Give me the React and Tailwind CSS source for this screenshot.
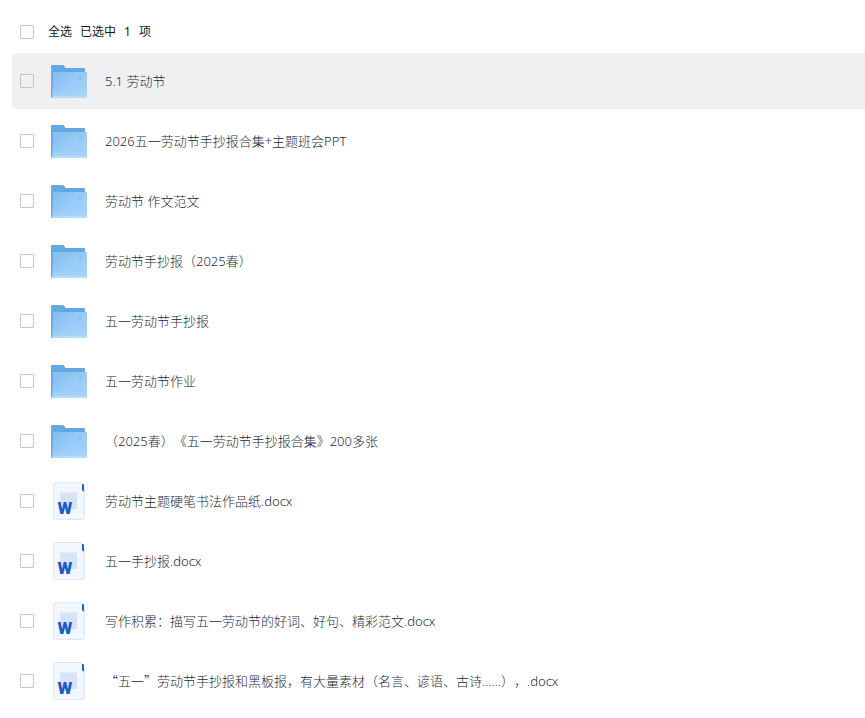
import React, { useState } from 'react'

const files = [
  { id: 1, type: 'folder', name: '5.1 劳动节' },
  { id: 2, type: 'folder', name: '2026五一劳动节手抄报合集+主题班会PPT' },
  { id: 3, type: 'folder', name: '劳动节 作文范文' },
  { id: 4, type: 'folder', name: '劳动节手抄报（2025春）' },
  { id: 5, type: 'folder', name: '五一劳动节手抄报' },
  { id: 6, type: 'folder', name: '五一劳动节作业' },
  { id: 7, type: 'folder', name: '（2025春）《五一劳动节手抄报合集》200多张' },
  { id: 8, type: 'doc', name: '劳动节主题硬笔书法作品纸.docx' },
  { id: 9, type: 'doc', name: '五一手抄报.docx' },
  { id: 10, type: 'doc', name: '写作积累：描写五一劳动节的好词、好句、精彩范文.docx' },
  {
    id: 11,
    type: 'doc',
    // curly quotes are full width only in the CJK font
    name: (
      <>
        <span className="font-['Noto_Sans_CJK_SC',sans-serif]">“五一”</span>
        劳动节手抄报和黑板报，有大量素材（名言、谚语、古诗……），.docx
      </>
    ),
  },
]

const FolderIcon = () => (
  <svg viewBox="0 0 36 34" className="w-9 h-[34px]" aria-hidden="true">
    <defs>
      <linearGradient id="folderFront" x1="0" y1="0" x2="1" y2="1">
        <stop offset="0" stopColor="#80bdec" />
        <stop offset="0.5" stopColor="#98cbf6" />
        <stop offset="1" stopColor="#a8d4f9" />
      </linearGradient>
    </defs>
    <path d="M0 2Q0 1 1 1H11.5Q12.5 1 13 1.8L14.5 4H33Q34 4 34 5V33H0Z" fill="#62a9e3" />
    <path d="M2 8H35.2Q36 8 36 8.8V34H1Z" fill="url(#folderFront)" />
    <path d="M2 28H36V32H2Z" fill="#b4dcfd" opacity="0.3" />
    <path d="M1.5 32H36V34H1.5Z" fill="#b9dffd" opacity="0.8" />
    <path d="M0 2V33Q0 34 1 34L2 8V3Z" fill="#66ace5" />
    <path d="M27 13.5H31M28 15.5H31" stroke="#68abe2" strokeWidth="0.7" opacity="0.7" />
  </svg>
)

const DocIcon = () => (
  <svg viewBox="0 0 32 38" className="w-8 h-[38px]" aria-hidden="true">
    <path
      d="M3 .5H28.5L31.5 9V35Q31.5 37.5 29 37.5H3Q.5 37.5 .5 35V3Q.5 .5 3 .5Z"
      fill="#f2f7fe"
      stroke="#dce6f5"
    />
    <path d="M29 2H30Q31 2 31 3V9.5H30.5Q29 9 29 7.5Z" fill="#2360bd" />
    <path d="M7 10.5H24V27H7Z" fill="#d8e3f7" />
    <text
      x="12"
      y="32"
      textAnchor="middle"
      className="font-['Roboto',sans-serif] font-black text-[17px]"
      fill="#1d5cc6"
    >
      W
    </text>
  </svg>
)

const checkboxStyle =
  'appearance-none w-3.5 h-3.5 shrink-0 rounded-[1px] border border-[#c4c6cb] checked:bg-blue-500'

const FileRow = ({ file, active, onSelect }) => (
  <li
    onClick={() => onSelect(file.id)}
    className={`flex items-center h-14 pl-2 rounded-l ${active ? 'bg-[#f0f0f2]' : 'bg-white'}`}
  >
    <input type="checkbox" id={`file-${file.id}`} className={checkboxStyle} />
    <label htmlFor={`file-${file.id}`} className="flex items-center pl-[17px] gap-[18px]">
      <span className="w-9 flex justify-center shrink-0">
        {file.type === 'folder' ? <FolderIcon /> : <DocIcon />}
      </span>
      <span className="text-[13px] leading-5 font-light text-[#252a38] [text-spacing-trim:space-all]">
        {file.name}
      </span>
    </label>
  </li>
)

export default function App() {
  const [activeId, setActiveId] = useState(1)

  return (
    <main className="min-h-screen bg-white pl-3 pt-5 pb-2 font-['Noto_Sans','Noto_Sans_CJK_SC',sans-serif]">
      <div className="flex items-center h-[23px] pl-2 mb-2.5 text-xs text-[#14182a]">
        <input type="checkbox" id="select-all" className={checkboxStyle} />
        <label htmlFor="select-all" className="ml-3.5 flex gap-2">
          <span>全选</span>
          <span>已选中</span>
          <span>1</span>
          <span>项</span>
        </label>
      </div>
      <ul className="flex flex-col gap-1">
        {files.map((file) => (
          <FileRow key={file.id} file={file} active={file.id === activeId} onSelect={setActiveId} />
        ))}
      </ul>
    </main>
  )
}
